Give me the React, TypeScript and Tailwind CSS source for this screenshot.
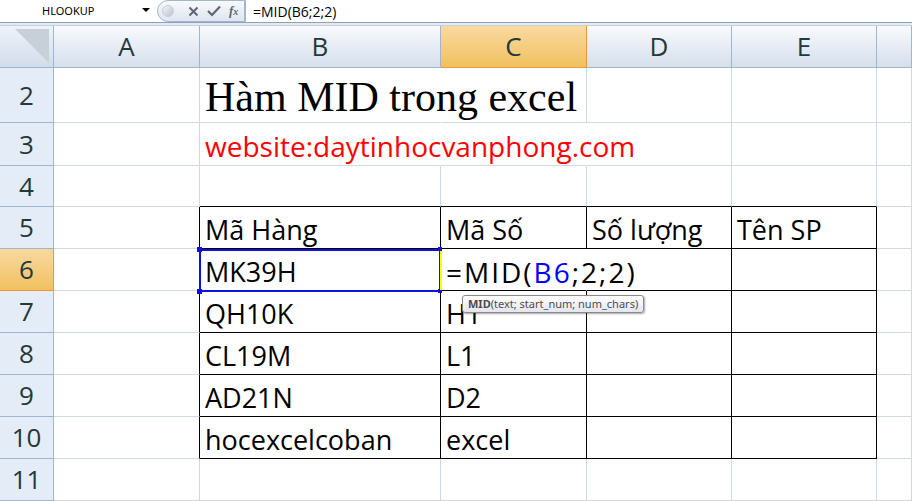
import { useMemo } from "react";

type Cell = { text?: string; cls?: string };

const cellFont = { fontFamily: '"Open Sans", "Noto Sans", sans-serif' };

const rows = [
  { n: 2, h: "h-[55px]" },
  { n: 3, h: "h-[43px]" },
  { n: 4, h: "h-[41px]" },
  { n: 5, h: "h-[42px]" },
  { n: 6, h: "h-[42px]" },
  { n: 7, h: "h-[42px]" },
  { n: 8, h: "h-[42px]" },
  { n: 9, h: "h-[42px]" },
  { n: 10, h: "h-[42px]" },
  { n: 11, h: "h-[42px]" },
];

const cols = ["A", "B", "C", "D", "E", "F"];

const data: Record<string, Cell> = {
  B5: { text: "Mã Hàng" },
  C5: { text: "Mã Số" },
  D5: { text: "Số lượng" },
  E5: { text: "Tên SP" },
  B6: { text: "MK39H" },
  B7: { text: "QH10K" },
  C7: { text: "H1" },
  B8: { text: "CL19M" },
  C8: { text: "L1" },
  B9: { text: "AD21N" },
  C9: { text: "D2" },
  B10: { text: "hocexcelcoban" },
  C10: { text: "excel" },
};

const inTable = (r: number, c: string) =>
  r >= 5 && r <= 10 && ["B", "C", "D", "E"].includes(c);

const FormulaBar = () => (
  <div className="flex h-[23px] bg-white border-b border-[#8da2bd]">
    <div className="relative w-[157px] flex items-center">
      <span
        className="pl-[42px] text-[11px] text-black"
        style={{ fontFamily: '"Noto Sans", sans-serif' }}
      >
        HLOOKUP
      </span>
      <span className="absolute left-[142px] top-[8px] w-0 h-0 border-l-[4px] border-r-[4px] border-t-[4px] border-l-transparent border-r-transparent border-t-black" />
    </div>
    <div className="flex items-center gap-[8px] w-[88px] h-[22px] rounded-l-full border border-[#a6b6ca] bg-gradient-to-b from-[#f7f9fc] to-[#dfe6ef] pl-[4px]">
      <span className="w-[12px] h-[12px] rounded-full bg-gradient-to-br from-[#f4f6f8] to-[#b9c2cc] border border-[#c8ced6]" />
      <svg width="11" height="11" viewBox="0 0 11 11" className="ml-[6px]">
        <path d="M1.5 1.5 L9.5 9.5 M9.5 1.5 L1.5 9.5" stroke="#5d6673" strokeWidth="2" />
      </svg>
      <svg width="14" height="12" viewBox="0 0 14 12">
        <path d="M1 6 L5 10 L13 1.5" stroke="#5d6673" strokeWidth="2.2" fill="none" />
      </svg>
      <span
        className="italic text-[13px] text-[#5d6673] font-bold"
        style={{ fontFamily: '"Liberation Serif", serif' }}
      >
        f<span className="text-[10px]">x</span>
      </span>
    </div>
    <div className="flex-1 flex items-center border-l border-[#a6b6ca] pl-[7px]">
      <span className="text-[14px] text-black" style={cellFont}>
        =MID(B6;2;2)
      </span>
    </div>
  </div>
);

const App = () => {
  const cells = useMemo(() => {
    const out: JSX.Element[] = [];
    rows.forEach((row) => {
      const r = row.n;
      const hl = r === 6;
      out.push(
        <div
          key={"h" + r}
          className={
            row.h +
            " flex items-center justify-center border-r border-b text-[26px] " +
            (hl
              ? "bg-gradient-to-b from-[#f9d99f] to-[#f1c15f] border-[#f29536] text-[#23393a]"
              : "bg-[#e4ecf7] border-[#9eb6ce] text-[#23393a]")
          }
          style={cellFont}
        >
          {r}
        </div>
      );
      cols.forEach((c) => {
        const id = c + r;
        const cell = data[id];
        let rb = "border-r-[#d0d7e5]";
        let bb = "border-b-[#d0d7e5]";
        if (inTable(r, c)) {
          rb = "border-r-black";
          bb = "border-b-black";
        }
        if (r === 4 && ["B", "C", "D", "E"].includes(c)) bb = "border-b-black";
        if (c === "A" && r >= 5 && r <= 10) rb = "border-r-black";
        // text spilling over into the next cell hides the grid line
        if (id === "B2" || id === "B3" || id === "C3" || id === "C6") rb = "border-r-transparent";
        out.push(
          <div
            key={id}
            className={
              row.h +
              " relative flex items-end border-r border-b px-[5px] whitespace-nowrap " +
              rb +
              " " +
              bb
            }
          >
            {id === "B2" && (
              <span
                className="text-[42px] leading-[50px] text-black"
                style={{ fontFamily: '"Liberation Serif", serif' }}
              >
                Hàm MID trong excel
              </span>
            )}
            {id === "B3" && (
              <span className="text-[28px] leading-[37px] text-[#ff0000]" style={cellFont}>
                website:daytinhocvanphong.com
              </span>
            )}
            {id === "C6" && (
              <span className="relative z-10 text-[28px] tracking-[2px] leading-[36px] text-black" style={cellFont}>
                =MID(<span className="text-[#0000ff]">B6</span>;2;2)
              </span>
            )}
            {cell?.text && (
              <span className="text-[27px] leading-[36px] text-black" style={cellFont}>
                {cell.text}
              </span>
            )}
          </div>
        );
      });
    });
    return out;
  }, []);

  return (
    <div className="w-[912px] h-[501px] overflow-hidden bg-white relative">
      <FormulaBar />
      <div className="h-[3px] bg-[#e3e9f1] border-b border-[#c5d1df]" />
      <div className="grid grid-cols-[54px_146px_241px_146px_145px_145px_1fr]">
        <div className="h-[42px] relative bg-gradient-to-b from-[#eef3f9] to-[#d3dcea] border-r border-b border-[#9eb6ce]">
          <span
            className="absolute right-[4px] bottom-[4px] w-0 h-0"
            style={{ borderBottom: "34px solid transparent", borderRight: "34px solid #c7cfd9" }}
          />
        </div>
        {cols.map((c) => (
          <div
            key={c}
            className={
              "h-[42px] flex items-center justify-center border-r border-b text-[26px] text-[#23393a] " +
              (c === "C"
                ? "bg-gradient-to-b from-[#f9d99f] to-[#f1c15f] border-[#f29536]"
                : "bg-gradient-to-b from-[#f8fafd] to-[#d6dfec] border-[#9eb6ce]")
            }
            style={cellFont}
          >
            {c === "F" ? "" : c}
          </div>
        ))}
        {cells}
      </div>

      {/* selection around B6 */}
      <div className="absolute left-[199px] top-[249px] w-[242px] h-[43px] border-2 border-[#1010e0] pointer-events-none" />
      <div className="absolute left-[197px] top-[247px] w-[5px] h-[5px] bg-[#1010e0]" />
      <div className="absolute left-[197px] top-[289px] w-[5px] h-[5px] bg-[#1010e0]" />
      <div className="absolute left-[438px] top-[247px] w-[4px] h-[4px] bg-[#1010e0]" />
      <div className="absolute left-[438px] top-[289px] w-[4px] h-[4px] bg-[#1010e0]" />
      <div className="absolute left-[440px] top-[251px] w-[2px] h-[39px] bg-[#ffff00]" />

      {/* tooltip */}
      <div
        className="absolute z-20 left-[462px] top-[295px] h-[18px] px-[5px] flex items-center rounded-[3px] border border-[#8a8a8a] bg-gradient-to-b from-white to-[#e4e5f0] shadow-[1px_1px_2px_rgba(0,0,0,0.35)] text-[11px] text-[#4c4c4c]"
        style={{ fontFamily: '"Noto Sans", sans-serif' }}
      >
        <span className="font-bold">MID</span>(text; start_num; num_chars)
      </div>
    </div>
  );
};

export default App;
